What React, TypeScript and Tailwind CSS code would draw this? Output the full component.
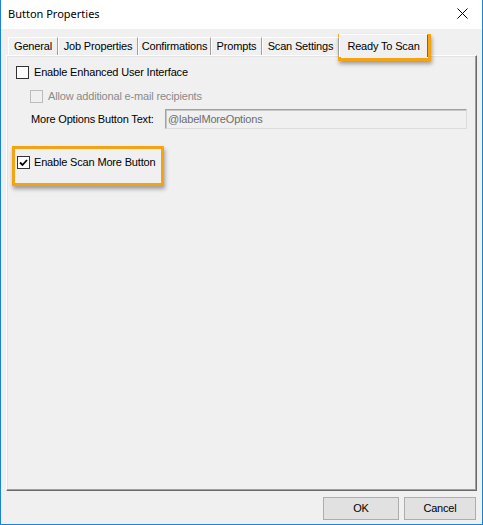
import React from "react";

// Win32 style "Button Properties" dialog, Ready To Scan tab selected.

const tabs = [
  { label: "General", w: "w-[50px]" },
  { label: "Job Properties", w: "w-[80px]" },
  { label: "Confirmations", w: "w-[73px]" },
  { label: "Prompts", w: "w-[51px]" },
  { label: "Scan Settings", w: "w-[77px]" },
];

function CheckBox({ checked, disabled }: { checked?: boolean; disabled?: boolean }) {
  return (
    <span
      className={
        "grid h-[13px] w-[13px] shrink-0 place-items-center border " +
        (disabled ? "border-[#bcbcbc] bg-[#f0f0f0]" : "border-[#333333] bg-white")
      }
    >
      {checked && (
        <svg width="9" height="8" viewBox="0 0 9 8">
          <path d="M1 3.5 L3.5 6 L8 1" fill="none" stroke="#000" strokeWidth="1.8" />
        </svg>
      )}
    </span>
  );
}

function Highlight({ className }: { className: string }) {
  return (
    <div
      className={
        "pointer-events-none absolute border-[3px] border-[#f5a313] shadow-[1px_3px_4px_rgba(0,0,0,0.35)] " +
        className
      }
    />
  );
}

export default function App() {
  return (
    <div
      className="relative flex h-[525px] w-[483px] flex-col border-x border-b border-[#1883d7] bg-[#f0f0f0] text-[11px] tracking-[-0.17px] text-black"
      style={{ fontFamily: '"Liberation Sans", Arial, sans-serif' }}
    >
      <header className="flex h-[29px] shrink-0 items-center justify-between bg-white pl-[7px] pr-[14px]">
        <span className="text-[11px] tracking-normal" style={{ fontFamily: '"Noto Sans", sans-serif' }}>
          Button Properties
        </span>
        <svg width="11" height="11" viewBox="0 0 11 11" className="-mt-[2px]">
          <path d="M0.5 0.5 L10.5 10.5 M10.5 0.5 L0.5 10.5" stroke="#000" strokeWidth="1" />
        </svg>
      </header>

      <div className="flex flex-1 flex-col px-[5px]">
        <div className="relative z-10 flex h-[26px] items-end pl-[2px]">
          {tabs.map((t) => (
            <div
              key={t.label}
              className={
                "flex h-[18px] items-center justify-center border-l border-t border-r border-l-white border-t-white border-r-[#a0a0a0] " +
                t.w
              }
            >
              {t.label}
            </div>
          ))}
          <div className="-mb-[2px] flex h-[23px] w-[89px] items-start justify-center border-l border-t border-r border-l-white border-t-white border-r-[#696969] bg-[#f0f0f0] pt-[3px]">
            Ready To Scan
          </div>
        </div>

        <section className="flex h-[436px] flex-col border border-b-[#696969] border-l-white border-r-[#696969] border-t-white shadow-[inset_-1px_-1px_0_#a0a0a0,inset_1px_1px_0_#e3e3e3]">
          <label className="mt-[10px] flex h-[13px] items-center gap-[5px] pl-[9px]">
            <CheckBox />
            <span>Enable Enhanced User Interface</span>
          </label>
          <label className="mt-[11px] flex h-[13px] items-center gap-[5px] pl-[23px] text-[#8a8a8a]">
            <CheckBox disabled />
            <span>Allow additional e-mail recipients</span>
          </label>
          <div className="mt-[6px] flex h-[20px] items-center pl-[24px]">
            <span className="w-[134px] shrink-0">More Options Button Text:</span>
            <div className="flex h-[20px] w-[302px] items-center border border-[#a0a0a0] border-b-[#dcdcdc] border-r-[#dcdcdc] bg-[#f0f0f0] pl-[2px] text-[#6d6d6d] shadow-[inset_1px_1px_0_#c8c8c8]">
              @labelMoreOptions
            </div>
          </div>
          <label className="mt-[27px] flex h-[13px] items-center gap-[4px] pl-[10px]">
            <CheckBox checked />
            <span>Enable Scan More Button</span>
          </label>
        </section>

        <footer className="flex justify-end gap-[5px] pr-[1px] pt-[6px]">
          <button className="h-[23px] w-[76px] border border-[#adadad] bg-[#e1e1e1]">OK</button>
          <button className="h-[23px] w-[72px] border border-[#adadad] bg-[#e1e1e1]">Cancel</button>
        </footer>
      </div>

      <Highlight className="left-[337px] top-[34px] h-[27px] w-[93px]" />
      <Highlight className="left-[11px] top-[146px] h-[40px] w-[152px]" />
    </div>
  );
}
